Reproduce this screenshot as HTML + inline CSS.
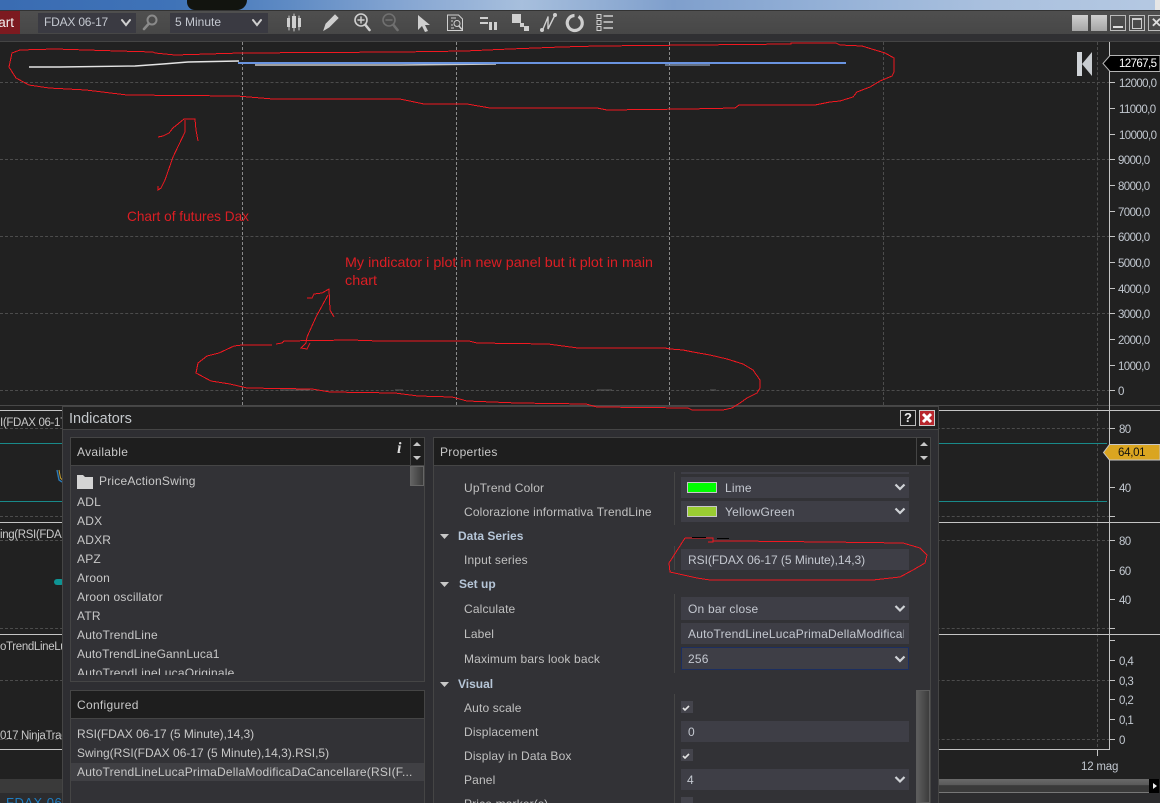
<!DOCTYPE html>
<html><head><meta charset="utf-8"><style>
html,body{margin:0;padding:0;background:#212121}
#r{position:relative;width:1160px;height:803px;overflow:hidden;background:#212121;font-family:"Liberation Sans",Arial,sans-serif;font-size:12px;color:#c8c8c8}
.a{position:absolute}
.t{position:absolute;white-space:nowrap;line-height:14px}
.dh{position:absolute;height:0;border-top:1px dashed #4c4c4c}
.dv{position:absolute;width:0;border-left:1px dashed #8a8a8a;top:42px;height:363px}
.sep{position:absolute;left:0;width:1160px;height:1px;background:#c4c4c4}
.tick{position:absolute;left:1110px;width:5px;height:1px;background:#c4c4c4}
.yl{position:absolute;left:1119px;white-space:nowrap;line-height:14px;font-size:11.5px;letter-spacing:-.6px;margin-top:1px;color:#c2c8d0}
.hd{position:absolute;background:#1e1e1e;border:1px solid #454545;box-sizing:border-box}
.pn{position:absolute;background:#323236;border:1px solid #454545;box-sizing:border-box}
.f{position:absolute;left:681px;width:228px;background:#3e3e46}
.lb{position:absolute;left:464px;white-space:nowrap;line-height:14px;color:#c0c0c0;letter-spacing:.15px}
.sec{position:absolute;left:458px;white-space:nowrap;line-height:14px;font-weight:bold;color:#b6c6d8}
.it{position:absolute;left:77px;white-space:nowrap;line-height:14px;letter-spacing:.2px;color:#c8c8c8}
.v{position:absolute;left:688px;white-space:nowrap;line-height:14px;color:#c4c8d0;letter-spacing:.2px}
.pl{left:0;color:#c8c8c8;font-size:11.5px;letter-spacing:-.35px}
</style></head><body><div id="r">
<!-- sky -->
<div class="a" style="left:0;top:0;width:1160px;height:10px;background:linear-gradient(90deg,#3a6cb2 0,#3f73b8 15%,#5f8bc4 25%,#86a6d2 35%,#a7bfdd 45%,#7f9fcc 58%,#92afd6 70%,#a9c0de 85%,#b4c8e2 99%)"></div>
<div class="a" style="left:187px;top:0;width:60px;height:10px;background:#12140f;border-radius:0 0 28px 22px"></div>
<div class="a" style="left:1155px;top:0;width:5px;height:10px;background:#e6e6e6"></div>
<!-- toolbar -->
<div class="a" style="left:0;top:10px;width:1160px;height:24px;background:linear-gradient(#4f4f4f,#474747);border-top:1px solid #333;box-sizing:border-box"></div>
<div class="a" style="left:0;top:34px;width:1160px;height:7px;background:#303033"></div>
<div class="a" style="left:0;top:41px;width:1160px;height:1px;background:#444"></div>
<div class="a" style="left:0;top:11px;width:20px;height:23px;background:#7c1a20;overflow:hidden"><div class="t" style="left:-19px;top:5px;font-size:13.5px;color:#f2f2f2">Chart</div></div>
<div class="a" style="left:38px;top:13px;width:98px;height:20px;background:#3a3a42"></div>
<div class="t" style="left:44px;top:15px;color:#c4c8d0;letter-spacing:-.2px">FDAX 06-17</div>
<div class="a" style="left:170px;top:13px;width:98px;height:20px;background:#3a3a42"></div>
<div class="t" style="left:175px;top:15px;color:#c4c8d0">5 Minute</div>
<!-- window buttons -->
<div class="a" style="left:1072px;top:15px;width:16px;height:16px;background:linear-gradient(#cfcfcf,#a5a5a5)"></div>
<div class="a" style="left:1091px;top:15px;width:16px;height:16px;background:linear-gradient(#cfcfcf,#a5a5a5)"></div>
<div class="a" style="left:1110px;top:15px;width:14px;height:14px;border:1px solid #bbb"></div>
<div class="a" style="left:1113px;top:26px;width:10px;height:2px;background:#ddd"></div>
<div class="a" style="left:1129px;top:15px;width:14px;height:14px;border:1px solid #bbb"></div>
<div class="a" style="left:1132px;top:18px;width:8px;height:8px;border:1px solid #ccc;border-top:2px solid #ccc"></div>
<div class="a" style="left:1148px;top:15px;width:14px;height:14px;border:1px solid #bbb"></div>
<div class="t" style="left:1151px;top:16px;font-weight:bold;font-size:13px;color:#ddd">✕</div>
<!-- grid -->
<div class="dh" style="left:0;top:82px;width:1110px"></div>
<div class="dh" style="left:0;top:159px;width:1110px"></div>
<div class="dh" style="left:0;top:236px;width:1110px"></div>
<div class="dh" style="left:0;top:313px;width:1110px"></div>
<div class="dh" style="left:0;top:390px;width:1110px"></div>
<div class="dv" style="left:242px"></div><div class="dv" style="left:456px"></div><div class="dv" style="left:669px"></div>
<div class="dv" style="left:883px;border-color:#4c4c4c"></div>
<div class="dv" style="left:1097px;border-color:#4c4c4c;height:705px"></div>
<div class="dh" style="left:0;top:428px;width:1110px"></div>
<div class="dh" style="left:0;top:516px;width:1110px"></div>
<div class="dh" style="left:0;top:540px;width:1110px"></div>
<div class="dh" style="left:0;top:628px;width:1110px"></div>
<div class="dh" style="left:0;top:680px;width:1110px"></div>
<div class="dh" style="left:0;top:739px;width:1110px"></div>
<div class="a" style="left:0;top:405px;width:1160px;height:1px;background:#484848"></div>
<div class="sep" style="top:410px"></div><div class="sep" style="top:522px"></div><div class="sep" style="top:634px"></div>
<div class="sep" style="top:749px;width:1110px"></div>
<div class="a" style="left:1109px;top:42px;width:1px;height:708px;background:#c4c4c4"></div>
<div class="a" style="left:0;top:443px;width:1107px;height:1px;background:#198a8a"></div>
<div class="a" style="left:0;top:501px;width:1107px;height:1px;background:#198a8a"></div>
<!-- axis -->
<div class="tick" style="top:82px"></div><div class="yl" style="top:76px">12000,0</div>
<div class="tick" style="top:108px"></div><div class="yl" style="top:102px">11000,0</div>
<div class="tick" style="top:134px"></div><div class="yl" style="top:128px">10000,0</div>
<div class="tick" style="top:159px"></div><div class="yl" style="top:153px;left:1118px">9000,0</div>
<div class="tick" style="top:185px"></div><div class="yl" style="top:179px;left:1118px">8000,0</div>
<div class="tick" style="top:211px"></div><div class="yl" style="top:205px;left:1118px">7000,0</div>
<div class="tick" style="top:236px"></div><div class="yl" style="top:230px;left:1118px">6000,0</div>
<div class="tick" style="top:262px"></div><div class="yl" style="top:256px;left:1118px">5000,0</div>
<div class="tick" style="top:288px"></div><div class="yl" style="top:282px;left:1118px">4000,0</div>
<div class="tick" style="top:313px"></div><div class="yl" style="top:307px;left:1118px">3000,0</div>
<div class="tick" style="top:339px"></div><div class="yl" style="top:333px;left:1118px">2000,0</div>
<div class="tick" style="top:365px"></div><div class="yl" style="top:359px;left:1118px">1000,0</div>
<div class="tick" style="top:390px"></div><div class="yl" style="top:384px;left:1118px">0</div>
<div class="tick" style="top:428px"></div><div class="yl" style="top:422px">80</div>
<div class="tick" style="top:487px"></div><div class="yl" style="top:481px">40</div>
<div class="tick" style="top:516px"></div>
<div class="tick" style="top:540px"></div><div class="yl" style="top:534px">80</div>
<div class="tick" style="top:570px"></div><div class="yl" style="top:564px">60</div>
<div class="tick" style="top:599px"></div><div class="yl" style="top:593px">40</div>
<div class="tick" style="top:628px"></div>
<div class="tick" style="top:640px"></div>
<div class="tick" style="top:660px"></div><div class="yl" style="top:654px">0,4</div>
<div class="tick" style="top:680px"></div><div class="yl" style="top:674px">0,3</div>
<div class="tick" style="top:699px"></div><div class="yl" style="top:693px">0,2</div>
<div class="tick" style="top:719px"></div><div class="yl" style="top:713px">0,1</div>
<div class="tick" style="top:739px"></div><div class="yl" style="top:733px">0</div>
<div class="a" style="left:1097px;top:750px;width:1px;height:6px;background:#c4c4c4"></div>
<div class="t" style="left:1081px;top:760px;font-size:11.5px;letter-spacing:-.2px;color:#c2c8d0">12 mag</div>
<!-- left labels -->
<div class="t pl" style="top:416px">I(FDAX 06-17</div>
<div class="t pl" style="top:528px">ing(RSI(FDAX</div>
<div class="t pl" style="top:640px">oTrendLineLu</div>
<div class="t pl" style="top:729px">017 NinjaTrad</div>
<div class="a" style="left:54px;top:579px;width:10px;height:6px;border-radius:3px;background:#0e9494"></div>
<div class="a" style="left:0;top:779px;width:1149px;height:14px;background:linear-gradient(#6a6a6a,#5a5a5a 45%,#3a3a3a 50%,#3a3a3a);border-bottom:1px solid #777;box-sizing:border-box"></div>
<div class="a" style="left:0;top:779px;width:62px;height:14px;background:#3a3a3a"></div>
<div class="a" style="left:0;top:793px;width:1160px;height:10px;background:#2c2c2e"></div>
<div class="t" style="left:6px;top:796px;font-size:13px;color:#1f7fc4;letter-spacing:.5px">FDAX 06</div>
<div class="a" style="left:1149px;top:779px;width:10px;height:14px;background:#000"></div>
<div class="a" style="left:1153px;top:783px;width:0;height:0;border-left:4px solid #eee;border-top:3px solid transparent;border-bottom:3px solid transparent"></div>
<!-- chart overlay and annotations under the dialog -->
<svg class="a" style="left:0;top:0" width="1160" height="803" fill="none">
<path d="M57 470l2 10 3 2" stroke="#2a7ab8" stroke-width="1.4"/><path d="M59 470l1.500 8 2 2" stroke="#c9a030"/>
<polyline points="29,67 60,67 135,66 163,64 188,62 239,61" stroke="#e4e4e4" stroke-width="1.4"/>
<polyline points="255,65 300,65 400,65 496,64" stroke="#c8c8c8" stroke-width="1.4"/>
<rect x="238" y="62" width="608" height="2" fill="#6a94e0"/>
<line x1="665" y1="65" x2="710" y2="65" stroke="#a9c4ea" stroke-width="1"/>
<g stroke="#5a5a5a"><path d="M280 390h30M395 390h8M597 390h15M710 390h6"/></g>
<g stroke="#f01820" stroke-width="1" shape-rendering="crispEdges">
<polyline points="55,49 20,50 12,53 9,67 16,78 29,85 49,88 86,90 127,95 237,96 273,99 400,99 424,104 467,104 490,108 597,108 607,110 688,109 735,108 739,105 815,105 830,102 840,101 853,97 857,92 870,87 880,81 892,76 894,72 894,58 885,53 875,50 862,46 840,45 836,43 791,43 791,44 598,46 561,47 510,49 465,51 400,52 241,53 175,55 155,53 153,52 118,51 55,49"/>
<polyline points="158,137 163,136 169,133 173,128 184,119 195,119 196,130 198,141"/>
<polyline points="185,120 185,132 173,157 165,180 161,188 158,190 158,186"/>
<polyline points="307,298 312,298 314,294 322,293 329,289 330,310 334,317"/>
<polyline points="328,295 316,317 307,337 306,343 301,348 307,349 310,343"/>
</g>
<g font-family="'Liberation Sans',sans-serif" font-size="14" fill="#dc1e24">
<text x="127" y="221" textLength="122" lengthAdjust="spacingAndGlyphs">Chart of futures Dax</text>
<text x="345" y="267" textLength="308" lengthAdjust="spacingAndGlyphs">My indicator i plot in new panel but it plot in main</text>
<text x="345" y="285" textLength="32" lengthAdjust="spacingAndGlyphs">chart</text>
</g>
<!-- K icon -->
<rect x="1077" y="52" width="5" height="24" fill="#d0d4d8"/><path d="M1092 52v24l-10-12z" fill="#c8ccd0"/>
<!-- price markers -->
<path d="M1103 63.500l7-8H1160V71.500H1110z" fill="#000" stroke="#b4b4b4"/>
<path d="M1103.500 452.500l6-8H1160V460H1109.500z" fill="#daa520" stroke="#c8c8c8"/>
<!-- toolbar icons -->
<g stroke="#cfcfcf" fill="none" stroke-width="1.6" stroke-linecap="round">
<path d="M122 20l4 5 4-5" stroke="#d0d0d0" stroke-width="2"/>
<path d="M253 20l4 5 4-5" stroke-width="2"/>
<circle cx="152" cy="20" r="4.500" stroke="#8a8a8a" stroke-width="2"/><path d="M148.500 24l-4.500 5" stroke="#8a8a8a" stroke-width="2.600"/>
<path d="M289 16v14M294 14v17M299 16v14" stroke-width="1"/>
<circle cx="361" cy="20" r="6" stroke-width="1.600"/><path d="M365.500 25l4 5" stroke-width="2.600"/><path d="M358 20h6M361 17v6" stroke-width="1.400"/>
<g stroke="#707070"><circle cx="389" cy="20" r="6"/><path d="M393.500 25l4 5" stroke-width="2.600"/><path d="M386 20h6" stroke-width="1.400"/></g>
<path d="M447.500 15h11l4 4v11.500h-15z" stroke-width="1"/><path d="M451 18h5M451 21h2M451 25h2M451 28h3" stroke-width="1" stroke-linecap="butt"/><circle cx="457" cy="23.500" r="3" stroke-width="1"/><path d="M459 26l2.500 3" stroke-width="1.400"/>
<path d="M324 30l2-6 9-9 3 3-9 9z" fill="#cfcfcf" stroke-width="1"/>
<path d="M548 17l-5 12M548 17v12l7-14" stroke-width="1.400"/><circle cx="542" cy="30" r="2" fill="#cfcfcf" stroke="none"/><circle cx="555" cy="15" r="2" fill="#cfcfcf" stroke="none"/>
<path d="M574.500 15.500a7.500 7.500 0 1 0 4 1" stroke-width="3.200" stroke-linecap="butt"/>
<path d="M603.500 16h9.500M603.500 22h9.500M603.500 28h9.500" stroke-width="1.600" stroke-linecap="butt"/>
</g>
<g fill="#cfcfcf">
<path d="M287 18h3v9h-3zM292 16h4v12h-4zM298 18h3v9h-3z"/>
<path d="M418 15v15l4-4 3 6 3-1-3-6h5z"/>
<path d="M480 17h8v2h-8zM480 22h8v2h-8zM489 22h3v8h-3zM494 22h3v8h-3z"/>
<path d="M512 14h9v9h-9zM520 23h4v4h-4zM524 26h5v5h-5z"/>
<path d="M597 14.500h4v4h-4zM597 20.500h4v4h-4zM597 26.500h4v4h-4z" fill="none" stroke="#cfcfcf"/>
</g>
</svg>
<div class="t" style="left:1119px;top:57px;font-size:11.500px;letter-spacing:-.6px;color:#fff">12767,5</div>
<div class="t" style="left:1118px;top:446px;font-size:11.500px;letter-spacing:-.3px;color:#111">64,01</div>
<!-- dialog -->
<div class="a" style="left:62px;top:406px;width:877px;height:397px;background:#2e2e32;border:1px solid #454545;border-bottom:0;box-sizing:border-box"></div>
<div class="a" style="left:63px;top:407px;width:875px;height:22px;background:#212121;border-bottom:1px solid #454545"></div>
<div class="t" style="left:69px;top:412px;font-size:14.500px;color:#c4c8cc">Indicators</div>
<div class="a" style="left:900px;top:410px;width:16px;height:16px;background:#1d1d1d;border:1px solid #bbb;box-sizing:border-box;color:#eee;font-weight:bold;font-size:13px;line-height:14px;text-align:center">?</div>
<div class="a" style="left:919px;top:410px;width:16px;height:16px;background:#b8262c;border:1px solid #ccc;box-sizing:border-box"></div>
<svg class="a" style="left:919px;top:410px" width="16" height="16"><path d="M4 4l8 8M12 4l-8 8" stroke="#fff" stroke-width="3"/></svg>
<!-- Available -->
<div class="pn" style="left:70px;top:437px;width:355px;height:245px"></div>
<div class="hd" style="left:70px;top:437px;width:355px;height:29px"></div>
<div class="t" style="left:77px;top:445px;letter-spacing:.3px">Available</div>
<div class="t" style="left:397px;top:442px;font-family:'Liberation Serif',serif;font-style:italic;font-weight:bold;font-size:16px;color:#ddd">i</div>
<div class="a" style="left:410px;top:438px;width:1px;height:27px;background:#454545"></div>
<div class="a" style="left:413px;top:442px;border-left:4px solid transparent;border-right:4px solid transparent;border-bottom:4px solid #c8c8c8"></div>
<div class="a" style="left:413px;top:456px;border-left:4px solid transparent;border-right:4px solid transparent;border-top:4px solid #c8c8c8"></div>
<div class="a" style="left:410px;top:466px;width:14px;height:20px;background:linear-gradient(90deg,#626262,#3a3a3a);border:1px solid #666;box-sizing:border-box"></div>
<svg class="a" style="left:77px;top:475px" width="16" height="14"><path d="M0 0h6l2 2h8v12H0z" fill="#d4d4d4"/></svg>
<div class="it" style="left:99px;top:474px">PriceActionSwing</div>
<div class="it" style="top:495px">ADL</div>
<div class="it" style="top:514px">ADX</div>
<div class="it" style="top:533px">ADXR</div>
<div class="it" style="top:552px">APZ</div>
<div class="it" style="top:571px">Aroon</div>
<div class="it" style="top:590px">Aroon oscillator</div>
<div class="it" style="top:609px">ATR</div>
<div class="it" style="top:628px">AutoTrendLine</div>
<div class="it" style="top:647px;letter-spacing:.1px">AutoTrendLineGannLuca1</div>
<div class="a" style="left:71px;top:660px;width:339px;height:15px;overflow:hidden"><div class="it" style="left:6px;top:6px">AutoTrendLineLucaOriginale</div></div>
<!-- Configured -->
<div class="pn" style="left:70px;top:690px;width:355px;height:113px;border-bottom:0"></div>
<div class="hd" style="left:70px;top:690px;width:355px;height:29px"></div>
<div class="t" style="left:77px;top:698px;letter-spacing:.3px">Configured</div>
<div class="a" style="left:71px;top:763px;width:353px;height:18px;background:#404044"></div>
<div class="it" style="top:727px;letter-spacing:-.03px">RSI(FDAX 06-17 (5 Minute),14,3)</div>
<div class="it" style="top:746px;letter-spacing:0">Swing(RSI(FDAX 06-17 (5 Minute),14,3).RSI,5)</div>
<div class="it" style="top:765px">AutoTrendLineLucaPrimaDellaModificaDaCancellare(RSI(F...</div>
<!-- Properties -->
<div class="pn" style="left:433px;top:437px;width:498px;height:366px;border-bottom:0"></div>
<div class="hd" style="left:433px;top:437px;width:498px;height:29px"></div>
<div class="t" style="left:440px;top:445px;letter-spacing:.3px">Properties</div>
<div class="a" style="left:916px;top:438px;width:1px;height:27px;background:#454545"></div>
<div class="a" style="left:920px;top:442px;border-left:4px solid transparent;border-right:4px solid transparent;border-bottom:4px solid #c8c8c8"></div>
<div class="a" style="left:920px;top:456px;border-left:4px solid transparent;border-right:4px solid transparent;border-top:4px solid #c8c8c8"></div>
<div class="a" style="left:674px;top:472px;width:1px;height:53px;background:#454545"></div>
<div class="a" style="left:674px;top:546px;width:1px;height:24px;background:#454545"></div>
<div class="a" style="left:674px;top:594px;width:1px;height:79px;background:#454545"></div>
<div class="a" style="left:674px;top:694px;width:1px;height:109px;background:#454545"></div>
<div class="f" style="top:472px;height:2px"></div>
<div class="f" style="top:477px;height:21px"></div>
<div class="f" style="top:501px;height:21px"></div>
<div class="f" style="top:549px;height:21px"></div>
<div class="f" style="top:597px;height:23px"></div>
<div class="f" style="top:623px;height:21px"></div>
<div class="f" style="top:647px;height:23px;box-shadow:inset 0 0 0 1px #1c2e60"></div>
<div class="f" style="top:721px;height:21px"></div>
<div class="f" style="top:769px;height:21px"></div>
<div class="a" style="left:687px;top:482px;width:30px;height:11px;background:#00ff00;border:1px solid #c8c8c8;box-sizing:border-box"></div>
<div class="a" style="left:687px;top:506px;width:30px;height:11px;background:#9acd32;border:1px solid #c8c8c8;box-sizing:border-box"></div>
<div class="lb" style="top:481px">UpTrend Color</div>
<div class="lb" style="top:505px">Colorazione informativa TrendLine</div>
<div class="v" style="left:725px;top:481px">Lime</div>
<div class="v" style="left:725px;top:505px">YellowGreen</div>
<div class="sec" style="top:529px">Data Series</div>
<div class="lb" style="top:553px">Input series</div>
<div class="v" style="top:553px;letter-spacing:-.03px">RSI(FDAX 06-17 (5 Minute),14,3)</div>
<div class="sec" style="top:577px;left:459px">Set up</div>
<div class="lb" style="top:602px">Calculate</div>
<div class="v" style="top:602px">On bar close</div>
<div class="lb" style="top:627px">Label</div>
<div class="a" style="left:688px;top:627px;width:216px;height:14px;overflow:hidden"><div class="v" style="left:0;top:0">AutoTrendLineLucaPrimaDellaModificaDaCancellare</div></div>
<div class="lb" style="top:652px">Maximum bars look back</div>
<div class="v" style="top:652px">256</div>
<div class="sec" style="top:677px">Visual</div>
<div class="lb" style="top:701px">Auto scale</div>
<div class="lb" style="top:725px">Displacement</div>
<div class="v" style="top:725px">0</div>
<div class="lb" style="top:749px">Display in Data Box</div>
<div class="lb" style="top:773px">Panel</div>
<div class="v" style="left:687px;top:773px">4</div>
<div class="lb" style="top:797px">Price marker(s)</div>
<div class="a" style="left:681px;top:701px;width:12px;height:12px;background:#44444c"></div>
<div class="a" style="left:681px;top:749px;width:12px;height:12px;background:#44444c"></div>
<div class="a" style="left:681px;top:797px;width:12px;height:6px;background:#44444c"></div>
<div class="a" style="left:916px;top:690px;width:14px;height:113px;background:linear-gradient(90deg,#5e5e5e,#3c3c3c);border:1px solid #5c5c5c;box-sizing:border-box"></div>
<svg class="a" style="left:0;top:0" width="1160" height="803" fill="none">
<g stroke="#e2e2e2" stroke-width="1.600"><path d="M683 708l2 2 4-4M683 756l2 2 4-4"/></g>
<g stroke="#cfd2d6" stroke-width="2.200"><path d="M895.500 484.500l4.500 4.500 4.500-4.500M895.500 508.500l4.500 4.500 4.500-4.500M895.500 606l4.500 4.500 4.500-4.500M895.500 656.500l4.500 4.500 4.500-4.500M895.500 777l4.500 4.500 4.500-4.500"/></g>
<g fill="#c8c8c8"><path d="M440 534h9l-4.500 5zM440 582h9l-4.500 5zM440 682h9l-4.500 5z"/></g>
<g stroke="#f01820" shape-rendering="crispEdges">
<path d="M685 538H713V542H708M713 541H735L827 542L903 543L920 548L927 555L925 563L913 570L900 577L873 580H710L697 578L670 572L669 563L685 538"/>
<polyline points="242,345 234,346 219,353 207,356 198,363 196,373 211,381 230,384 247,388 312,389 330,392 395,393 418,396 452,397 467,401 517,403 586,404 597,407 688,408 692,410 723,410 732,408 740,403 747,398 757,393 760,388 760,380 753,370 743,364 727,359 710,355 693,352 683,350 670,349 665,348 578,348 548,344 477,343 469,341 379,341 351,340 284,341 282,343 276,344"/>
<polyline points="272,345 242,345"/>
</g>
<path d="M692 537.500h14M717 538.500h12" stroke="#000"/>
</svg>
</div></body></html>
